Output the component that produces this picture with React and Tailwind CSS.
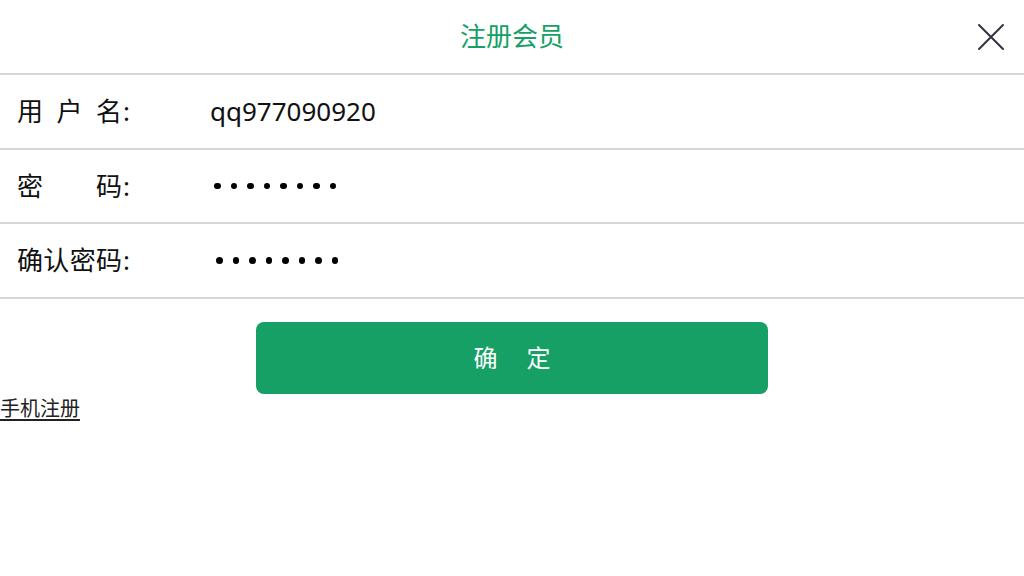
import React from 'react';

const FONT = { fontFamily: '"Noto Sans", "Noto Sans CJK SC", sans-serif' };

function Label({ chars }) {
  return (
    <div className="flex items-center w-[190px] shrink-0 pl-[17px]">
      <div className="flex justify-between w-[105px]">
        {chars.map((c, i) => (
          <span key={i}>{c}</span>
        ))}
      </div>
      <span className="ml-[1px]">:</span>
    </div>
  );
}

function Dots({ offset }) {
  return (
    <div className={`flex items-center gap-[10px] ${offset}`}>
      {Array.from({ length: 8 }).map((_, i) => (
        <span key={i} className="w-[6.5px] h-[6.5px] rounded-full bg-black" />
      ))}
    </div>
  );
}

export default function App() {
  return (
    <div className="w-[1024px] h-[576px] bg-white text-[#111] overflow-hidden" style={FONT}>
      {/* Header */}
      <div className="relative h-[75px] flex items-center justify-center border-b-2 border-[#d6d6d6]">
        <span className="text-[26px] text-[#17a065]">注册会员</span>
        <button className="absolute right-[18px] top-[22px] w-[30px] h-[30px] flex items-center justify-center">
          <svg width="28" height="28" viewBox="0 0 28 28" fill="none" stroke="#33333f" strokeWidth="2" strokeLinecap="round">
            <path d="M2 2 L26 26 M26 2 L2 26" />
          </svg>
        </button>
      </div>

      {/* Rows */}
      <div className="h-[75px] flex items-center border-b-2 border-[#d6d6d6] text-[26px]">
        <Label chars={['用', '户', '名']} />
        <span className="ml-[20px]">qq977090920</span>
      </div>
      <div className="h-[74px] flex items-center border-b-2 border-[#d6d6d6] text-[26px]">
        <Label chars={['密', '码']} />
        <Dots offset="ml-[24px]" />
      </div>
      <div className="h-[75px] flex items-center border-b-2 border-[#d6d6d6] text-[26px]">
        <Label chars={['确', '认', '密', '码']} />
        <Dots offset="ml-[26px]" />
      </div>

      {/* Submit */}
      <div className="flex justify-center pt-[23px]">
        <button className="w-[512px] h-[72px] rounded-[8px] bg-[#17a065] text-white text-[24px] flex items-center justify-center gap-[29px]">
          <span>确</span>
          <span>定</span>
        </button>
      </div>
      <div className="pt-[2px]">
        <a className="text-[20px] text-[#222] underline underline-offset-[3px] leading-[26px]">手机注册</a>
      </div>
    </div>
  );
}
